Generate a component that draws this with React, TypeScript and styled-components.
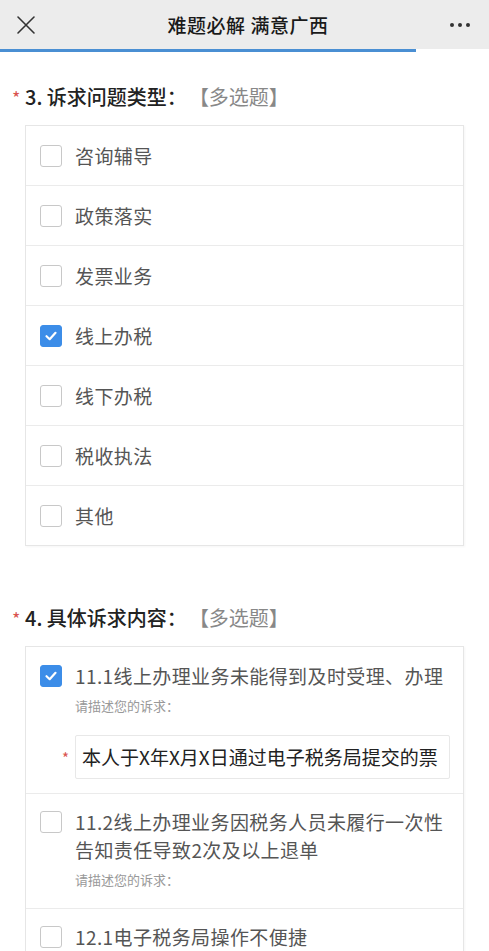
import React from "react";
import styled, { createGlobalStyle } from "styled-components";

const GlobalStyle = createGlobalStyle`
  html, body { margin: 0; padding: 0; background: #ffffff; }
  body { font-family: "Noto Sans CJK SC", "Noto Sans", sans-serif; }
  * { box-sizing: border-box; }
`;

const Page = styled.div`
  width: 489px;
  min-height: 951px;
  background: #fff;
  overflow: hidden;
`;

const Header = styled.div`
  height: 49px;
  background: #ececec;
  display: flex;
  align-items: center;
  justify-content: space-between;
  padding: 0 18px 0 15px;
`;

const HeaderTitle = styled.div`
  font-size: 19px;
  font-weight: 500;
  color: #1a1a1a;
  letter-spacing: 0.5px;
  margin-left: 10px;
`;

const IconButton = styled.div`
  width: 22px;
  height: 22px;
  display: flex;
  align-items: center;
  justify-content: center;
`;

const Progress = styled.div`
  height: 3px;
  background: #fff;
`;

const ProgressBar = styled.div<{ $pct: number }>`
  height: 3px;
  width: ${(p) => p.$pct}%;
  background: #4a8fd3;
`;

const Section = styled.div<{ $top: number }>`
  padding: ${(p) => p.$top}px 25px 0 25px;
`;

const QuestionTitle = styled.div`
  position: relative;
  font-size: 20px;
  line-height: 28px;
  font-weight: 500;
  color: #222;
  margin-bottom: 14px;
`;

const Star = styled.span`
  position: absolute;
  left: -13px;
  top: 0px;
  font-size: 18px;
  color: #d9534f;
  font-weight: 400;
`;

const Hint = styled.span`
  color: #888;
  font-weight: 400;
  margin-left: 12px;
`;

const Box = styled.div`
  border: 1px solid #e6e6e6;
  box-shadow: 1px 1px 2px rgba(0, 0, 0, 0.04);
`;

const Row = styled.div<{ $pad?: string }>`
  display: flex;
  align-items: flex-start;
  padding: ${(p) => p.$pad || "0 14px"};
  border-top: 1px solid #ebebeb;
  &:first-child { border-top: none; }
`;

const SimpleRow = styled.div`
  height: 60px;
  display: flex;
  align-items: center;
  padding: 0 14px;
  border-top: 1px solid #ebebeb;
  &:first-child { border-top: none; height: 59px; }
`;

const Check = styled.div<{ $on?: boolean }>`
  flex: none;
  width: 22px;
  height: 22px;
  border-radius: 3px;
  border: 1px solid ${(p) => (p.$on ? "#3c8de8" : "#c8c8c8")};
  background: ${(p) => (p.$on ? "#3c8de8" : "#fff")};
  display: flex;
  align-items: center;
  justify-content: center;
  margin-right: 13px;
`;

const Label = styled.div`
  font-size: 19px;
  line-height: 28px;
  color: #555;
  letter-spacing: 0.4px;
  white-space: nowrap;
`;

const Body = styled.div`
  flex: 1;
  min-width: 0;
  margin-top: -3px;
`;

const SubLabel = styled.div`
  font-size: 13px;
  line-height: 20px;
  color: #999;
  margin-top: 6px;
`;

const InputLine = styled.div`
  display: flex;
  align-items: center;
  margin-top: 19px;
  margin-left: -13px;
  margin-right: -1px;
`;

const InputStar = styled.span`
  width: 13px;
  font-size: 15px;
  color: #d9534f;
  flex: none;
`;

const InputBox = styled.div`
  flex: 1;
  height: 44px;
  border: 1px solid #e8e8e8;
  border-radius: 2px;
  padding: 0 6px;
  font-size: 19px;
  line-height: 42px;
  color: #222;
  white-space: nowrap;
  overflow: hidden;
`;

const CheckMark = () => (
  <svg width="14" height="14" viewBox="0 0 14 14">
    <path d="M2.5 7.2 L5.7 10.2 L11.5 3.8" stroke="#fff" strokeWidth="2.2" fill="none" strokeLinecap="round" strokeLinejoin="round" />
  </svg>
);

const q3 = [
  { t: "咨询辅导", on: false },
  { t: "政策落实", on: false },
  { t: "发票业务", on: false },
  { t: "线上办税", on: true },
  { t: "线下办税", on: false },
  { t: "税收执法", on: false },
  { t: "其他", on: false },
];

export default function App() {
  return (
    <Page>
      <GlobalStyle />
      <Header>
        <IconButton>
          <svg width="20" height="20" viewBox="0 0 20 20">
            <path d="M2 2 L18 18 M18 2 L2 18" stroke="#333" strokeWidth="1.6" strokeLinecap="round" />
          </svg>
        </IconButton>
        <HeaderTitle>难题必解 满意广西</HeaderTitle>
        <IconButton>
          <svg width="22" height="6" viewBox="0 0 22 6">
            <circle cx="3" cy="3" r="2" fill="#333" />
            <circle cx="11" cy="3" r="2" fill="#333" />
            <circle cx="19" cy="3" r="2" fill="#333" />
          </svg>
        </IconButton>
      </Header>
      <Progress>
        <ProgressBar $pct={85} />
      </Progress>

      <Section $top={31}>
        <QuestionTitle>
          <Star>*</Star>3. 诉求问题类型：<Hint>【多选题】</Hint>
        </QuestionTitle>
        <Box>
          {q3.map((o) => (
            <SimpleRow key={o.t}>
              <Check $on={o.on}>{o.on && <CheckMark />}</Check>
              <Label>{o.t}</Label>
            </SimpleRow>
          ))}
        </Box>
      </Section>

      <Section $top={58}>
        <QuestionTitle>
          <Star>*</Star>4. 具体诉求内容：<Hint>【多选题】</Hint>
        </QuestionTitle>
        <Box>
          <Row $pad="18px 14px 14px 14px">
            <Check $on>
              <CheckMark />
            </Check>
            <Body>
              <Label>11.1线上办理业务未能得到及时受理、办理</Label>
              <SubLabel>请描述您的诉求：</SubLabel>
              <InputLine>
                <InputStar>*</InputStar>
                <InputBox>本人于X年X月X日通过电子税务局提交的票</InputBox>
              </InputLine>
            </Body>
          </Row>
          <Row $pad="17px 14px 18px 14px">
            <Check />
            <Body>
              <Label>
                11.2线上办理业务因税务人员未履行一次性
                <br />
                告知责任导致2次及以上退单
              </Label>
              <SubLabel>请描述您的诉求：</SubLabel>
            </Body>
          </Row>
          <Row $pad="17px 14px 18px 14px">
            <Check />
            <Body>
              <Label>12.1电子税务局操作不便捷</Label>
            </Body>
          </Row>
        </Box>
      </Section>
    </Page>
  );
}
